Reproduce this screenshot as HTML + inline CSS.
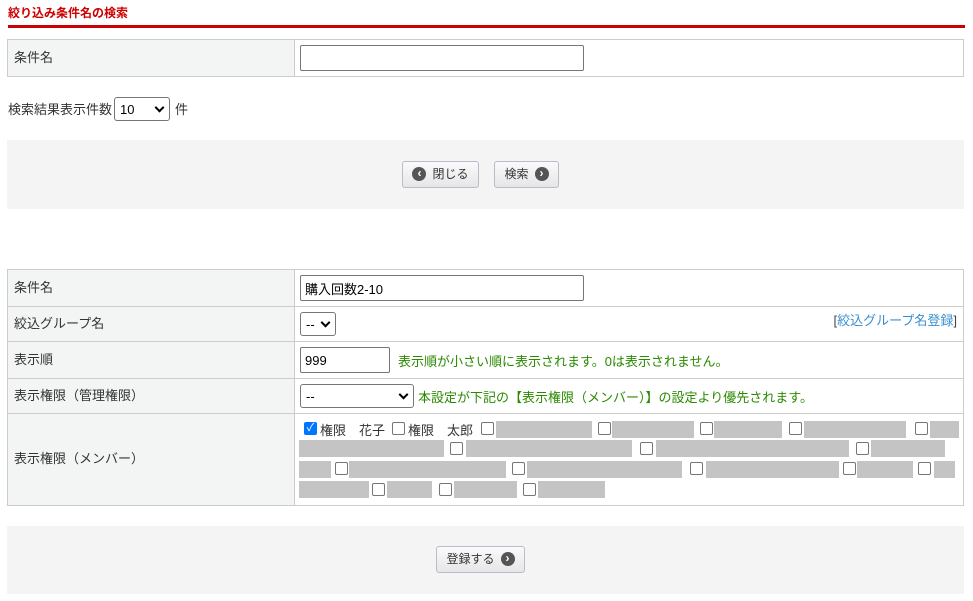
<!DOCTYPE html><html><head><meta charset="utf-8"><style>
*{box-sizing:border-box}body{margin:0;width:973px;height:601px;background:#fff;font-family:"Liberation Sans","Noto Sans CJK JP",sans-serif;font-size:13px;color:#333;position:relative;overflow:hidden}
.a{position:absolute}
.h{left:8px;top:4px;color:#c00;font-weight:bold;font-size:12px}
.red{left:8px;top:25px;width:957px;height:3px;background:#c00}
.row{position:absolute;left:7px;width:957px;border:1px solid #ccc;background:#fff}
.lab{position:absolute;left:0;top:0;bottom:0;width:287px;background:#f3f4f4;border-right:1px solid #ccc;padding-left:6px;padding-bottom:4px;display:flex;align-items:center}
.inp{position:absolute;border:1px solid #767676;border-radius:2px;background:#fff;font-size:13px;padding-left:4px;display:flex;align-items:center;color:#000}
.sel{position:absolute;border:1px solid #767676;border-radius:3px;background:#fff;font-size:13px;padding-left:5px;display:flex;align-items:center;color:#000}
.sel:after{content:"";position:absolute;right:6px;top:50%;width:5px;height:5px;border-right:2px solid #000;border-bottom:2px solid #000;transform:translateY(-70%) rotate(45deg)}
.bar{position:absolute;left:7px;width:957px;background:#f4f4f4}
.btn{position:absolute;height:27px;border:1px solid #bbc;border-radius:3px;background:linear-gradient(#fafafa,#e6e6e6);display:flex;align-items:center;justify-content:center;font-size:12px;gap:6px;padding-bottom:2px}
.ic{width:14px;height:14px;border-radius:50%;background:#555;color:#fff;font-size:12px;line-height:13px;text-align:center;font-weight:bold}
.g{position:absolute;background:#c4c4c4;height:17px}
.c{position:absolute;width:13px;height:13px;border:1px solid #767676;border-radius:2px;background:#fff}
.grn{color:#2a8a00}
</style></head><body>
<div class="a h">絞り込み条件名の検索</div>
<div class="a red"></div>
<div class="row" style="top:39px;height:38px"><div class="lab">条件名</div><div class="inp" style="left:292px;top:5px;width:284px;height:26px"></div></div>
<div class="a" style="left:8px;top:99px">検索結果表示件数</div>
<div class="sel" style="left:114px;top:97px;width:56px;height:24px">10</div>
<div class="a" style="left:175px;top:99px">件</div>
<div class="bar" style="top:140px;height:69px"></div>
<div class="btn" style="left:402px;top:161px;width:77px"><span class="ic">‹</span>閉じる</div>
<div class="btn" style="left:494px;top:161px;width:65px">検索<span class="ic">›</span></div>

<div class="row" style="top:269px;height:38px"><div class="lab">条件名</div><div class="inp" style="left:292px;top:5px;width:284px;height:26px">購入回数2-10</div></div>
<div class="row" style="top:306px;height:36px"><div class="lab">絞込グループ名</div><div class="sel" style="left:292px;top:5px;width:36px;height:24px">--</div><div class="a" style="right:6px;top:3px;color:#444">[<span style="color:#3a8fd0">絞込グループ名登録</span>]</div></div>
<div class="row" style="top:341px;height:38px"><div class="lab">表示順</div><div class="inp" style="left:292px;top:5px;width:90px;height:26px">999</div><div class="a grn" style="left:390px;top:9px">表示順が小さい順に表示されます。0は表示されません。</div></div>
<div class="row" style="top:378px;height:36px"><div class="lab">表示権限（管理権限）</div><div class="sel" style="left:292px;top:5px;width:114px;height:24px">--</div><div class="a grn" style="left:410px;top:8px">本設定が下記の【表示権限（メンバー）】の設定より優先されます。</div></div>
<div class="row" style="top:413px;height:93px"><div class="lab">表示権限（メンバー）</div></div>
<div class="a" style="left:304px;top:422px;width:13px;height:13px;background:#0075ff;border-radius:2px;color:#fff;font-size:11px;line-height:13px;text-align:center">✓</div>
<div class="a" style="left:320px;top:420px">権限　花子</div>
<div class="c" style="left:392px;top:422px"></div>
<div class="a" style="left:408px;top:420px">権限　太郎</div>
<div class="c" style="left:481px;top:422px"></div><div class="g" style="left:496px;top:421px;width:96px"></div>
<div class="c" style="left:598px;top:422px"></div><div class="g" style="left:612px;top:421px;width:82px"></div>
<div class="c" style="left:700px;top:422px"></div><div class="g" style="left:714px;top:421px;width:68px"></div>
<div class="c" style="left:789px;top:422px"></div><div class="g" style="left:804px;top:421px;width:102px"></div>
<div class="c" style="left:915px;top:422px"></div><div class="g" style="left:930px;top:421px;width:29px"></div>
<div class="g" style="left:299px;top:440px;width:145px"></div>
<div class="c" style="left:450px;top:442px"></div><div class="g" style="left:466px;top:440px;width:166px"></div>
<div class="c" style="left:640px;top:442px"></div><div class="g" style="left:656px;top:440px;width:193px"></div>
<div class="c" style="left:856px;top:442px"></div><div class="g" style="left:871px;top:440px;width:74px"></div>
<div class="g" style="left:299px;top:461px;width:32px"></div>
<div class="c" style="left:335px;top:462px"></div><div class="g" style="left:349px;top:461px;width:157px"></div>
<div class="c" style="left:512px;top:462px"></div><div class="g" style="left:527px;top:461px;width:155px"></div>
<div class="c" style="left:690px;top:462px"></div><div class="g" style="left:706px;top:461px;width:133px"></div>
<div class="c" style="left:843px;top:462px"></div><div class="g" style="left:857px;top:461px;width:56px"></div>
<div class="c" style="left:918px;top:462px"></div><div class="g" style="left:934px;top:461px;width:21px"></div>
<div class="g" style="left:299px;top:481px;width:70px"></div>
<div class="c" style="left:372px;top:483px"></div><div class="g" style="left:387px;top:481px;width:45px"></div>
<div class="c" style="left:439px;top:483px"></div><div class="g" style="left:454px;top:481px;width:63px"></div>
<div class="c" style="left:523px;top:483px"></div><div class="g" style="left:538px;top:481px;width:67px"></div>
<div class="bar" style="top:526px;height:68px"></div>
<div class="btn" style="left:436px;top:546px;width:89px">登録する<span class="ic">›</span></div>
</body></html>
